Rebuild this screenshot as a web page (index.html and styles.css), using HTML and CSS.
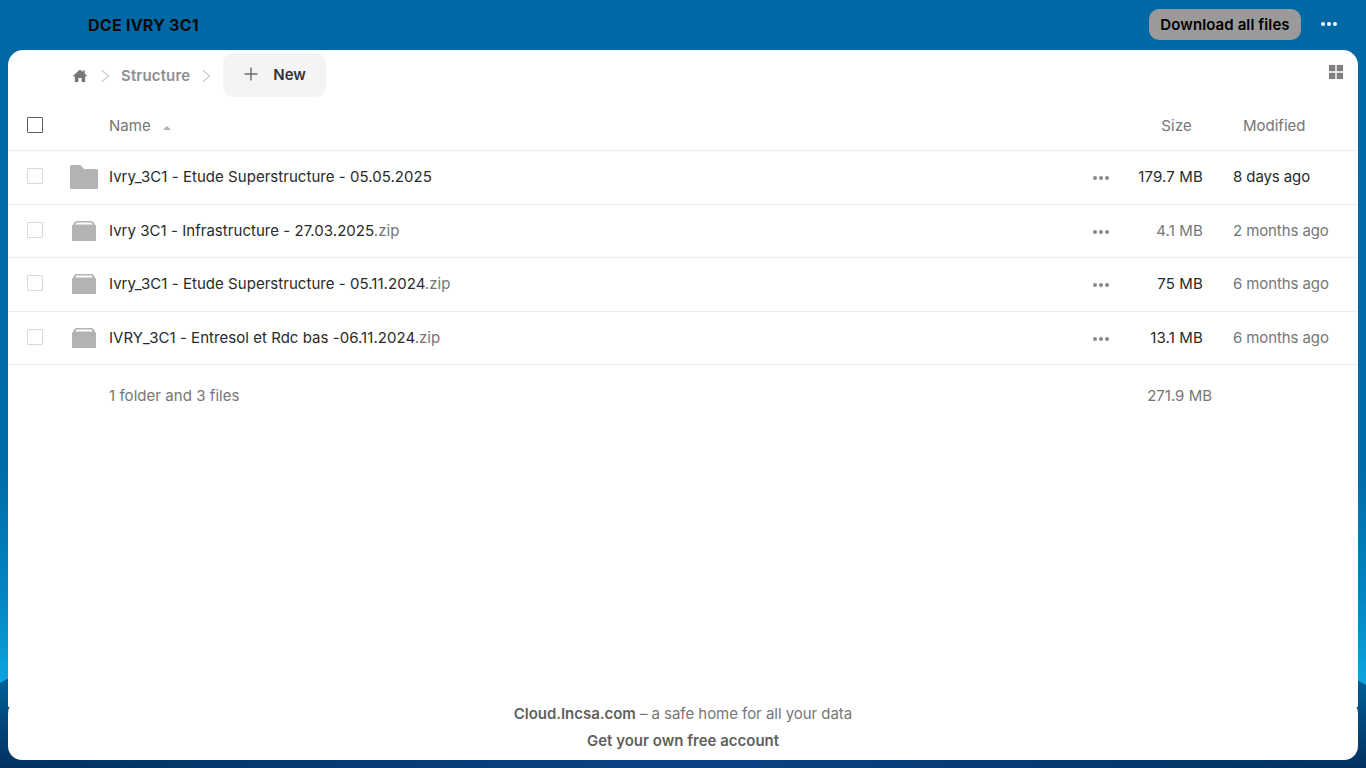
FILE: index.html
```html
<!DOCTYPE html>
<html>
<head>
  <meta charset="utf-8">
  <title>DCE IVRY 3C1</title>
  <link rel="stylesheet" href="styles.css">
</head>
<body>
  <header class="topbar">
    <h1 class="share-title">DCE IVRY 3C1</h1>
    <div class="top-actions">
      <button class="download-btn">Download all files</button>
      <span class="dots dots-white"><i></i><i></i><i></i></span>
    </div>
  </header>

  <main class="panel">
    <div class="files">
      <div class="crumbs">
        <svg class="home-icon" width="16" height="16" viewBox="0 0 16 16"><path d="M8 1.600 0.600 8.200h2.200V14h3.600v-4h3.200v4h3.600V8.200h2.200L12.800 5.700V2.400h-2v1.500z"/></svg>
        <svg class="crumb-sep" width="10" height="14" viewBox="0 0 10 14"><path d="M1.500 1 8.500 7l-7 6"/></svg>
        <span class="crumb-name">Structure</span>
        <svg class="crumb-sep" width="10" height="14" viewBox="0 0 10 14"><path d="M1.500 1 8.500 7l-7 6"/></svg>
        <button class="new-btn">
          <svg width="14" height="14" viewBox="0 0 14 14"><path d="M7 0.500v13M0.500 7h13"/></svg>
          New
        </button>
        <svg class="grid-icon" width="14" height="14" viewBox="0 0 14 14"><path d="M0 0h6.300v6.300H0zM7.700 0H14v6.300H7.700zM0 7.700h6.300V14H0zM7.700 7.700H14V14H7.700z"/></svg>
      </div>

      <div class="row head">
        <span class="cell-check"><span class="check check-dark"></span></span>
        <span class="cell-icon"></span>
        <span class="cell-name">Name <b class="sort-arrow"></b></span>
        <span class="cell-size">Size</span>
        <span class="cell-date">Modified</span>
      </div>

      <div class="row item">
        <span class="cell-check"><span class="check"></span></span>
        <span class="cell-icon">
          <svg width="28" height="24" viewBox="0 0 28 24"><path d="M0 1.500A1.500 1.500 0 0 1 1.500 0h9L14 4h12.500A1.500 1.500 0 0 1 28 5.500V22.500A1.500 1.500 0 0 1 26.500 24H1.500A1.500 1.500 0 0 1 0 22.500z"/></svg>
        </span>
        <span class="cell-name">Ivry_3C1 - Etude Superstructure - 05.05.2025</span>
        <span class="dots"><i></i><i></i><i></i></span>
        <span class="cell-size dark">179.7 MB</span>
        <span class="cell-date dark">8 days ago</span>
      </div>

      <div class="row item">
        <span class="cell-check"><span class="check"></span></span>
        <span class="cell-icon">
          <svg width="24" height="20" viewBox="0 0 24 20"><path d="M0 5 2.500 1.200Q3.300 0 4.800 0h14.400q1.500 0 2.300 1.200L24 5v15H0z"/><path class="zip-lid" d="M3.400 3.400 4.700 1.500h14.600l1.300 1.900z"/></svg>
        </span>
        <span class="cell-name">Ivry 3C1 - Infrastructure - 27.03.2025<em>.zip</em></span>
        <span class="dots"><i></i><i></i><i></i></span>
        <span class="cell-size">4.1 MB</span>
        <span class="cell-date">2 months ago</span>
      </div>

      <div class="row item">
        <span class="cell-check"><span class="check"></span></span>
        <span class="cell-icon">
          <svg width="24" height="20" viewBox="0 0 24 20"><path d="M0 5 2.500 1.200Q3.300 0 4.800 0h14.400q1.500 0 2.300 1.200L24 5v15H0z"/><path class="zip-lid" d="M3.400 3.400 4.700 1.500h14.600l1.300 1.900z"/></svg>
        </span>
        <span class="cell-name">Ivry_3C1 - Etude Superstructure - 05.11.2024<em>.zip</em></span>
        <span class="dots"><i></i><i></i><i></i></span>
        <span class="cell-size dark">75 MB</span>
        <span class="cell-date">6 months ago</span>
      </div>

      <div class="row item">
        <span class="cell-check"><span class="check"></span></span>
        <span class="cell-icon">
          <svg width="24" height="20" viewBox="0 0 24 20"><path d="M0 5 2.500 1.200Q3.300 0 4.800 0h14.400q1.500 0 2.300 1.200L24 5v15H0z"/><path class="zip-lid" d="M3.400 3.400 4.700 1.500h14.600l1.300 1.900z"/></svg>
        </span>
        <span class="cell-name">IVRY_3C1 - Entresol et Rdc bas -06.11.2024<em>.zip</em></span>
        <span class="dots"><i></i><i></i><i></i></span>
        <span class="cell-size dark">13.1 MB</span>
        <span class="cell-date">6 months ago</span>
      </div>

      <div class="summary">
        <span class="summary-count">1 folder and 3 files</span>
        <span>271.9 MB</span>
      </div>
    </div>

    <footer class="foot">
      <p><strong>Cloud.Incsa.com</strong> – a safe home for all your data</p>
      <p><strong>Get your own free account</strong></p>
    </footer>
  </main>
</body>
</html>
```

FILE: styles.css
```css
* {
  box-sizing: border-box;
}
body {
  margin: 0;
  height: 768px;
  overflow: hidden;
  font-family: 'Inter', sans-serif;
  font-size: 15px;
  color: #2a2a2a;
  display: flex;
  flex-direction: column;
  background: linear-gradient(to bottom, #0069a5 0%, #006ca8 62%, #0486c5 78%, #0ea8e2 90%);
}
/* dark hill behind the panel, only its edges show */
body::before {
  content: "";
  position: absolute;
  z-index: -1;
  left: 0;
  top: 300px;
  width: 1366px;
  height: 468px;
  clip-path: polygon(0 383px, 50% 0, 100% 385px, 100% 100%, 0 100%);
  background:
    radial-gradient(ellipse 50% 60px at 50% 100%, #0c4286, transparent),
    linear-gradient(to bottom, #00608f 0%, #005c94 82%, #02305f 100%);
}
.topbar {
  height: 50px;
  flex: none;
  display: flex;
  align-items: center;
  justify-content: space-between;
  padding: 0 29px 2px 88px;
}
.share-title {
  margin: 0;
  padding-top: 2px;
  font-size: 16px;
  font-weight: 700;
  letter-spacing: 0.250px;
  color: #0b0b0b;
}
.top-actions {
  display: flex;
  align-items: center;
  gap: 20px;
}
.download-btn {
  width: 152px;
  height: 31px;
  border: none;
  border-radius: 10px;
  padding: 0;
  background: #9a9a9a;
  color: #000;
  font-family: inherit;
  font-size: 15px;
  font-weight: 600;
  letter-spacing: 0.100px;
}
.panel {
  margin: 0 8px 8px;
  height: 710px;
  display: flex;
  flex-direction: column;
}
.files {
  height: 657px;
  flex: none;
  background: #fff;
  border-radius: 15px 15px 0 0;
}
.crumbs {
  height: 51px;
  display: flex;
  align-items: center;
  padding: 0 15px 0 64px;
}
.home-icon {
  margin-right: 12px;
  fill: #767676;
}
.crumb-sep {
  fill: none;
  stroke: #d2d2d2;
  stroke-width: 1.500;
}
.crumb-name {
  margin: 0 11px;
  font-weight: 600;
  letter-spacing: 0.150px;
  color: #8f8f8f;
}
.new-btn {
  margin: 0 0 1px 12px;
  width: 103px;
  height: 44px;
  border: none;
  border-radius: 10px;
  background: #f4f4f4;
  color: #333;
  font-family: inherit;
  font-size: 15px;
  font-weight: 600;
  display: flex;
  align-items: center;
  gap: 15px;
  padding: 0 0 2px 21px;
}
.new-btn svg {
  stroke: #6b6b6b;
  stroke-width: 1.400;
  fill: none;
}
.grid-icon {
  margin-left: auto;
  margin-top: -8px;
  fill: #808080;
}
.row {
  display: flex;
  align-items: center;
  border-bottom: 1px solid #ededed;
}
.head {
  height: 50px;
  color: #767676;
}
.item {
  height: 53.500px;
}
.cell-check {
  width: 54px;
  padding: 0 0 2px 19px;
  display: flex;
}
.check {
  width: 16px;
  height: 16px;
  border: 1px solid #d9d9d9;
  border-radius: 1px;
}
.check-dark {
  border-color: #5f5f5f;
}
.cell-icon {
  width: 47px;
  display: flex;
  justify-content: center;
  padding-right: 4px;
}
.cell-icon svg {
  fill: #b3b3b3;
  display: block;
}
.zip-lid {
  fill: #fff;
}
.cell-name {
  flex: 1;
  padding-bottom: 1px;
  letter-spacing: 0.040px;
}
.cell-name em {
  font-style: normal;
  color: #767676;
}
.sort-arrow {
  display: inline-block;
  margin: 0 0 1px 8px;
  width: 0;
  height: 0;
  border-left: 4px solid transparent;
  border-right: 4px solid transparent;
  border-bottom: 4px solid #b0b0b0;
}
.cell-size {
  width: 94px;
  padding-bottom: 1px;
  letter-spacing: 0.150px;
  text-align: right;
  color: #767676;
}
.head .cell-size {
  padding-right: 11px;
}
.cell-date {
  width: 155px;
  padding: 0 0 1px 30px;
  letter-spacing: -0.100px;
  white-space: nowrap;
  color: #767676;
}
.head .cell-date {
  padding-left: 40px;
  letter-spacing: 0;
}
.dark {
  color: #2a2a2a;
}
.dots {
  display: flex;
  gap: 2px;
  margin-top: 2px;
}
.dots i {
  width: 4px;
  height: 4px;
  border-radius: 50%;
  background: #8a8a8a;
}
.dots-white {
  margin-top: 0;
}
.dots-white i {
  background: #fff;
}
.summary {
  display: flex;
  justify-content: space-between;
  padding: 21px 146px 0 101px;
  color: #767676;
}
.summary-count {
  letter-spacing: 0.050px;
}
.foot {
  height: 53px;
  flex: none;
  background: #fff;
  border-radius: 2px 2px 14px 14px / 8px 8px 14px 14px;
  text-align: center;
  color: #767676;
}
.foot p {
  margin: 0;
  line-height: 14px;
  letter-spacing: -0.040px;
}
.foot p + p {
  margin-top: 11px;
  line-height: 18px;
  letter-spacing: 0;
}
.foot strong {
  font-weight: 600;
  color: #5f5f5f;
}
```
